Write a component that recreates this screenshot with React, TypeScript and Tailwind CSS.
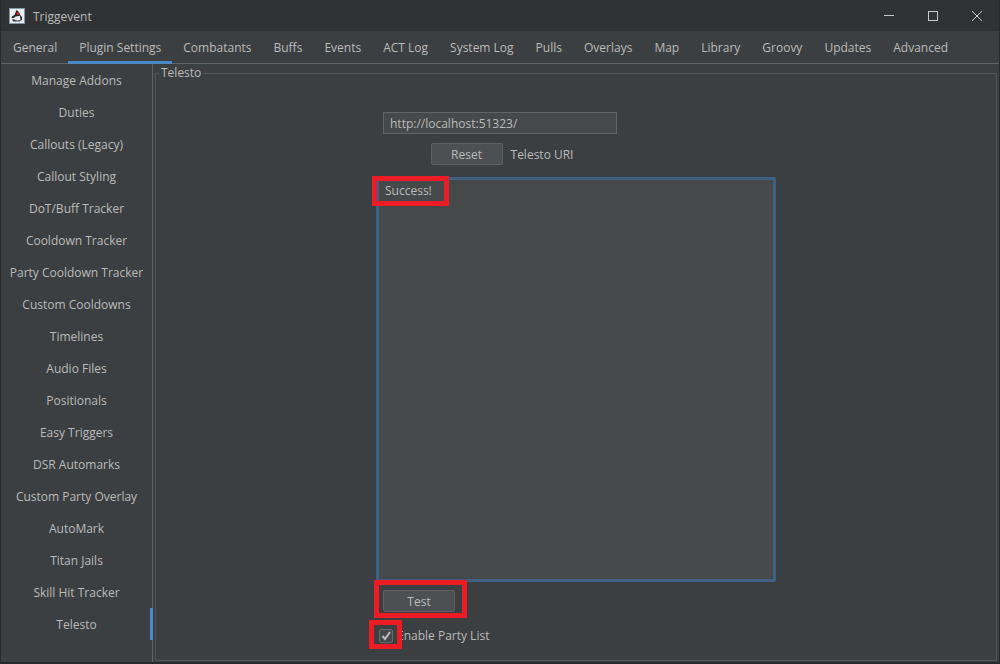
const tabs = [
  "General",
  "Plugin Settings",
  "Combatants",
  "Buffs",
  "Events",
  "ACT Log",
  "System Log",
  "Pulls",
  "Overlays",
  "Map",
  "Library",
  "Groovy",
  "Updates",
  "Advanced",
];

const pages = [
  "Manage Addons",
  "Duties",
  "Callouts (Legacy)",
  "Callout Styling",
  "DoT/Buff Tracker",
  "Cooldown Tracker",
  "Party Cooldown Tracker",
  "Custom Cooldowns",
  "Timelines",
  "Audio Files",
  "Positionals",
  "Easy Triggers",
  "DSR Automarks",
  "Custom Party Overlay",
  "AutoMark",
  "Titan Jails",
  "Skill Hit Tracker",
  "Telesto",
];

function DukeIcon() {
  return (
    <svg width="16" height="16" viewBox="0 0 16 16" aria-hidden="true">
      <rect width="16" height="16" fill="#7d98a8" />
      <rect x="1" y="1" width="14" height="14" fill="#e9edef" />
      <path d="M7.5 2 L9.5 3.5 L11.5 7.5 L10 8 L6.5 8.5 L5 10 L2.5 10 L3 8.5 L5.5 7 L6.5 4.5 Z" fill="#23272a" />
      <path d="M11 7 L13 9 L13 12 L11.5 12.5 Z" fill="#23272a" />
      <path d="M3 11 L5.5 11.5 L8 12.5 L12 12 L11 13.5 H4 Z" fill="#3a3f43" />
      <circle cx="9" cy="5.5" r="1.5" fill="#d8232a" />
    </svg>
  );
}

function TitleBar() {
  return (
    <header className="flex h-[31px] items-center bg-[#313233] pl-2">
      <DukeIcon />
      <h1 className="ml-2 flex-1 pt-0.5">Triggevent</h1>
      <button type="button" aria-label="Minimize" className="flex h-full w-11 items-center justify-center">
        <svg width="10" height="10" viewBox="0 0 10 10" stroke="#c8c8c8">
          <path d="M0 4.5H10" />
        </svg>
      </button>
      <button type="button" aria-label="Maximize" className="flex h-full w-11 items-center justify-center">
        <svg width="10" height="10" viewBox="0 0 10 10" fill="none" stroke="#c8c8c8">
          <rect x="0.5" y="0.5" width="9" height="9" />
        </svg>
      </button>
      <button type="button" aria-label="Close" className="flex h-full w-11 items-center justify-center">
        <svg width="10" height="10" viewBox="0 0 10 10" stroke="#c8c8c8">
          <path d="M0 0L10 10M10 0L0 10" />
        </svg>
      </button>
    </header>
  );
}

export default function App() {
  return (
    <div className="flex min-h-screen flex-col border-x border-b-2 border-[#28292a] bg-[#3c3f41] font-['Open_Sans','Segoe_UI',sans-serif] text-xs text-[#bbbbbb]">
      <TitleBar />

      <nav className="flex h-[33px] border-b border-[#616365] pl-px">
        {tabs.map((tab) => (
          <button
            key={tab}
            type="button"
            className={`h-[33px] border-b-3 px-[11px] pt-1 whitespace-nowrap ${
              tab === "Plugin Settings" ? "border-[#4a88c7]" : "border-transparent"
            }`}
          >
            {tab}
          </button>
        ))}
      </nav>

      <div className="flex flex-1">
        <nav className="flex w-[152px] shrink-0 flex-col border-r border-[#616365]">
          {pages.map((page) => (
            <button
              key={page}
              type="button"
              className={`-mr-px h-8 border-r-3 pt-0.5 pl-0.5 whitespace-nowrap ${
                page === "Telesto" ? "border-[#4a88c7]" : "border-transparent"
              }`}
            >
              {page}
            </button>
          ))}
        </nav>

        <main className="flex flex-1 px-0.5 pb-px">
          <fieldset className="flex-1 border border-[#515355] px-[3px]">
            <legend className="px-0.5 leading-[18px]">Telesto</legend>

            <div className="mx-auto mt-[30px] w-[400px]">
              <div className="ml-[7px] flex w-[234px] flex-col items-center gap-[9px]">
                <input
                  id="telesto-uri"
                  type="text"
                  defaultValue="http://localhost:51323/"
                  className="h-[22px] w-full border border-[#646464] bg-[#45494a] px-1.5"
                />
                <div className="flex items-center gap-2 pl-1">
                  <button type="button" className="h-[22px] w-[72px] rounded-xs border border-[#5e6060] bg-[#4c5052] pt-px">
                    Reset
                  </button>
                  <label htmlFor="telesto-uri" className="pt-0.5">
                    Telesto URI
                  </label>
                </div>
              </div>

              <div className="relative mt-3">
                <textarea
                  aria-label="Test result"
                  readOnly
                  defaultValue="Success!"
                  className="block h-[405px] w-full resize-none rounded-xs border-3 border-[#3d6185] bg-[#45494a] px-1.5 py-[3px] outline-none"
                />
                <div className="pointer-events-none absolute -top-px -left-1 h-[30px] w-[77px] border-5 border-[#ed1c24]" />
              </div>

              <div className="relative mt-2 ml-[7px] w-[72px]">
                <button type="button" className="block h-[22px] w-full rounded-xs border border-[#5e6060] bg-[#4c5052] pt-px">
                  Test
                </button>
                <div className="pointer-events-none absolute -top-2.5 -left-[9px] h-[38px] w-[93px] border-5 border-[#ed1c24]" />
              </div>

              <label className="relative mt-4 ml-[3px] flex w-fit items-center gap-1">
                <span className="relative flex">
                  <input
                    type="checkbox"
                    defaultChecked
                    className="peer h-3.5 w-3.5 appearance-none rounded-xs border border-[#6b6b6b] bg-[#43494a]"
                  />
                  <svg
                    className="pointer-events-none absolute inset-0 hidden peer-checked:block"
                    width="14"
                    height="14"
                    viewBox="0 0 14 14"
                    fill="none"
                    stroke="#bcbcbc"
                    strokeWidth="2"
                  >
                    <path d="M3.5 7L6 10L11 3" />
                  </svg>
                </span>
                Enable Party List
                <span className="pointer-events-none absolute -top-2 -left-2.5 h-[29px] w-[33px] border-5 border-[#ed1c24]" />
              </label>
            </div>
          </fieldset>
        </main>
      </div>
    </div>
  );
}
